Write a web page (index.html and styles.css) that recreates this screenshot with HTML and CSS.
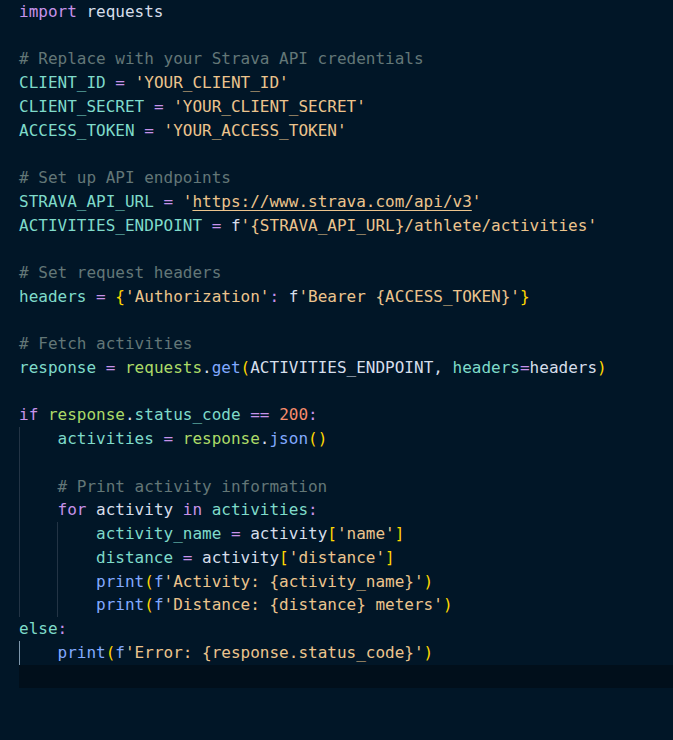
FILE: index.html
```html
<!DOCTYPE html>
<html lang="en">
<head>
<meta charset="utf-8">
<title>strava.py</title>
<link rel="stylesheet" href="styles.css">
</head>
<body>
<div class="editor">
<div class="ln"><span class="kw">import</span> <span class="tx">requests</span></div>
<div class="ln"> </div>
<div class="ln"><span class="cm"># Replace with your Strava API credentials</span></div>
<div class="ln"><span class="vr">CLIENT_ID</span> <span class="op">=</span> <span class="st">'YOUR_CLIENT_ID'</span></div>
<div class="ln"><span class="vr">CLIENT_SECRET</span> <span class="op">=</span> <span class="st">'YOUR_CLIENT_SECRET'</span></div>
<div class="ln"><span class="vr">ACCESS_TOKEN</span> <span class="op">=</span> <span class="st">'YOUR_ACCESS_TOKEN'</span></div>
<div class="ln"> </div>
<div class="ln"><span class="cm"># Set up API endpoints</span></div>
<div class="ln"><span class="vr">STRAVA_API_URL</span> <span class="op">=</span> <span class="st">'<span class="url">https://www.strava.com/api/v3</span>'</span></div>
<div class="ln"><span class="vr">ACTIVITIES_ENDPOINT</span> <span class="op">=</span> <span class="tx">f</span><span class="st">'{STRAVA_API_URL}/athlete/activities'</span></div>
<div class="ln"> </div>
<div class="ln"><span class="cm"># Set request headers</span></div>
<div class="ln"><span class="vr">headers</span> <span class="op">=</span> <span class="br">{</span><span class="st">'Authorization'</span><span class="op">:</span> <span class="tx">f</span><span class="st">'Bearer {ACCESS_TOKEN}'</span><span class="br">}</span></div>
<div class="ln"> </div>
<div class="ln"><span class="cm"># Fetch activities</span></div>
<div class="ln"><span class="vr">response</span> <span class="op">=</span> <span class="md">requests</span><span class="tx">.</span><span class="fn">get</span><span class="br">(</span><span class="tx">ACTIVITIES_ENDPOINT, </span><span class="vr">headers</span><span class="op">=</span><span class="tx">headers</span><span class="br">)</span></div>
<div class="ln"> </div>
<div class="ln"><span class="kw">if</span> <span class="md">response</span><span class="tx">.</span><span class="vr">status_code</span> <span class="op">==</span> <span class="nm">200</span><span class="op">:</span></div>
<div class="ln g1">    <span class="vr">activities</span> <span class="op">=</span> <span class="md">response</span><span class="tx">.</span><span class="fn">json</span><span class="br">()</span></div>
<div class="ln g1"> </div>
<div class="ln g1">    <span class="cm"># Print activity information</span></div>
<div class="ln g1">    <span class="kw">for</span> <span class="tx">activity</span> <span class="kw">in</span> <span class="vr">activities</span><span class="op">:</span></div>
<div class="ln g2">        <span class="vr">activity_name</span> <span class="op">=</span> <span class="tx">activity</span><span class="br">[</span><span class="st">'name'</span><span class="br">]</span></div>
<div class="ln g2">        <span class="vr">distance</span> <span class="op">=</span> <span class="tx">activity</span><span class="br">[</span><span class="st">'distance'</span><span class="br">]</span></div>
<div class="ln g2">        <span class="fn">print</span><span class="br">(</span><span class="pf">f</span><span class="st">'Activity: {activity_name}'</span><span class="br">)</span></div>
<div class="ln g2">        <span class="fn">print</span><span class="br">(</span><span class="pf">f</span><span class="st">'Distance: {distance} meters'</span><span class="br">)</span></div>
<div class="ln"><span class="vr">else</span><span class="op">:</span></div>
<div class="ln ga">    <span class="fn">print</span><span class="br">(</span><span class="pf">f</span><span class="st">'Error: {response.status_code}'</span><span class="br">)</span></div>
<div class="ln cur"> </div>
</div>
</body>
</html>
```
FILE: styles.css
```css
html, body {
  margin: 0;
  padding: 0;
  background: #011627;
}

body {
  width: 673px;
  height: 740px;
  overflow: hidden;
}

.editor {
  font-family: "DejaVu Sans Mono", "Liberation Mono", monospace;
  font-size: 16px;
  line-height: 23.74px;
  color: #d6deeb;
}

.ln {
  white-space: pre;
  height: 23.74px;
  padding-left: 19px;
}

.g1 {
  background-image: linear-gradient(to right, transparent 19px, #233445 19px, #233445 20px, transparent 20px);
}

.g2 {
  background-image:
    linear-gradient(to right, transparent 19px, #233445 19px, #233445 20px, transparent 20px),
    linear-gradient(to right, transparent 57px, #233445 57px, #233445 58px, transparent 58px);
}

.ga {
  background-image: linear-gradient(to right, transparent 19px, #7e97ac 19px, #7e97ac 20px, transparent 20px);
}

.cur {
  margin-left: 19px;
  padding-left: 0;
  background: #010f1b;
}

.kw { color: #c792ea; }
.tx { color: #d6deeb; }
.cm { color: #637777; }
.vr { color: #7fdbca; }
.op { color: #c792ea; }
.st { color: #ecc48d; }
.md { color: #addb67; }
.fn { color: #82aaff; }
.nm { color: #f78c6c; }
.br { color: #ffd700; }
.pf { color: #82aaff; }

.url {
  text-decoration: underline;
  text-decoration-color: #ecc48d;
  text-underline-offset: 3px;
}
```
